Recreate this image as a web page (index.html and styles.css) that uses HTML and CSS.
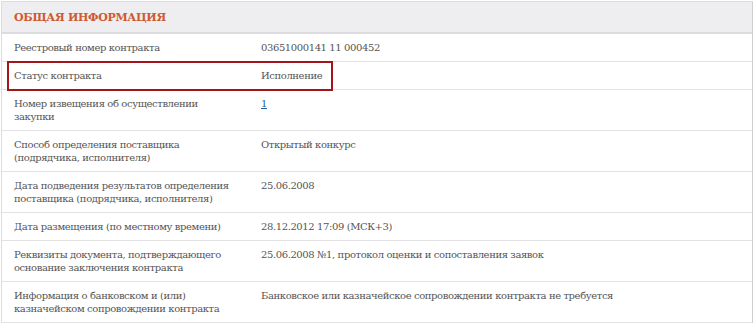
FILE: index.html
```html
<!DOCTYPE html>
<html lang="ru">
<head>
    <meta charset="UTF-8">
    <title>Общая информация</title>
    <link rel="stylesheet" href="styles.css">
</head>
<body>
    <div class="panel">
        <div class="panel-head">
            <h2>Общая информация</h2>
        </div>
        <table class="info">
            <tr>
                <td class="label">Реестровый номер контракта</td>
                <td>03651000141 11 000452</td>
            </tr>
            <tr class="marked">
                <td class="label">Статус контракта<span class="mark"></span></td>
                <td>Исполнение</td>
            </tr>
            <tr>
                <td class="label">Номер извещения об осуществлении закупки</td>
                <td><a href="#">1</a></td>
            </tr>
            <tr>
                <td class="label">Способ определения поставщика (подрядчика, исполнителя)</td>
                <td>Открытый конкурс</td>
            </tr>
            <tr>
                <td class="label">Дата подведения результатов определения поставщика (подрядчика, исполнителя)</td>
                <td>25.06.2008</td>
            </tr>
            <tr>
                <td class="label">Дата размещения (по местному времени)</td>
                <td>28.12.2012 17:09 (МСК+3)</td>
            </tr>
            <tr>
                <td class="label">Реквизиты документа, подтверждающего основание заключения контракта</td>
                <td>25.06.2008 №1, протокол оценки и сопоставления заявок</td>
            </tr>
            <tr>
                <td class="label">Информация о банковском и (или) казначейском сопровождении контракта</td>
                <td>Банковское или казначейское сопровождении контракта не требуется</td>
            </tr>
        </table>
    </div>
</body>
</html>
```

FILE: styles.css
```css
body {
    margin: 0;
    padding: 1px 1px 0 1px;
    font-family: "DejaVu Serif", "Liberation Serif", serif;
    font-size: 10px;
    letter-spacing: -0.4px;
    color: #555;
    background: #fff;
}
.panel {
    border: 1px solid #dcdcdf;
    border-right-color: #cfcfd3;
    border-bottom: none;
}
.panel-head {
    background-color: #eeeef0;
    border-bottom: 2px solid #dcdcdf;
    height: 30px;
    padding: 0 12px;
    display: flex;
    align-items: center;
}
.panel-head h2 {
    margin: 0;
    font-size: 11px;
    font-weight: bold;
    letter-spacing: -0.3px;
    text-transform: uppercase;
    color: #cf5a30;
}
.info {
    width: 100%;
    border-collapse: collapse;
}
.info td {
    vertical-align: top;
    padding: 7px 12px 7px 12px;
    line-height: 13px;
    border-bottom: 1px solid #e2e2e4;
}
.info td.label {
    width: 223px;
    position: relative;
}
.info a {
    color: #1f5f9e;
}
.mark {
    position: absolute;
    left: 5px;
    top: -1px;
    width: 322px;
    height: 26px;
    border: 2px solid #a3151b;
}
```
